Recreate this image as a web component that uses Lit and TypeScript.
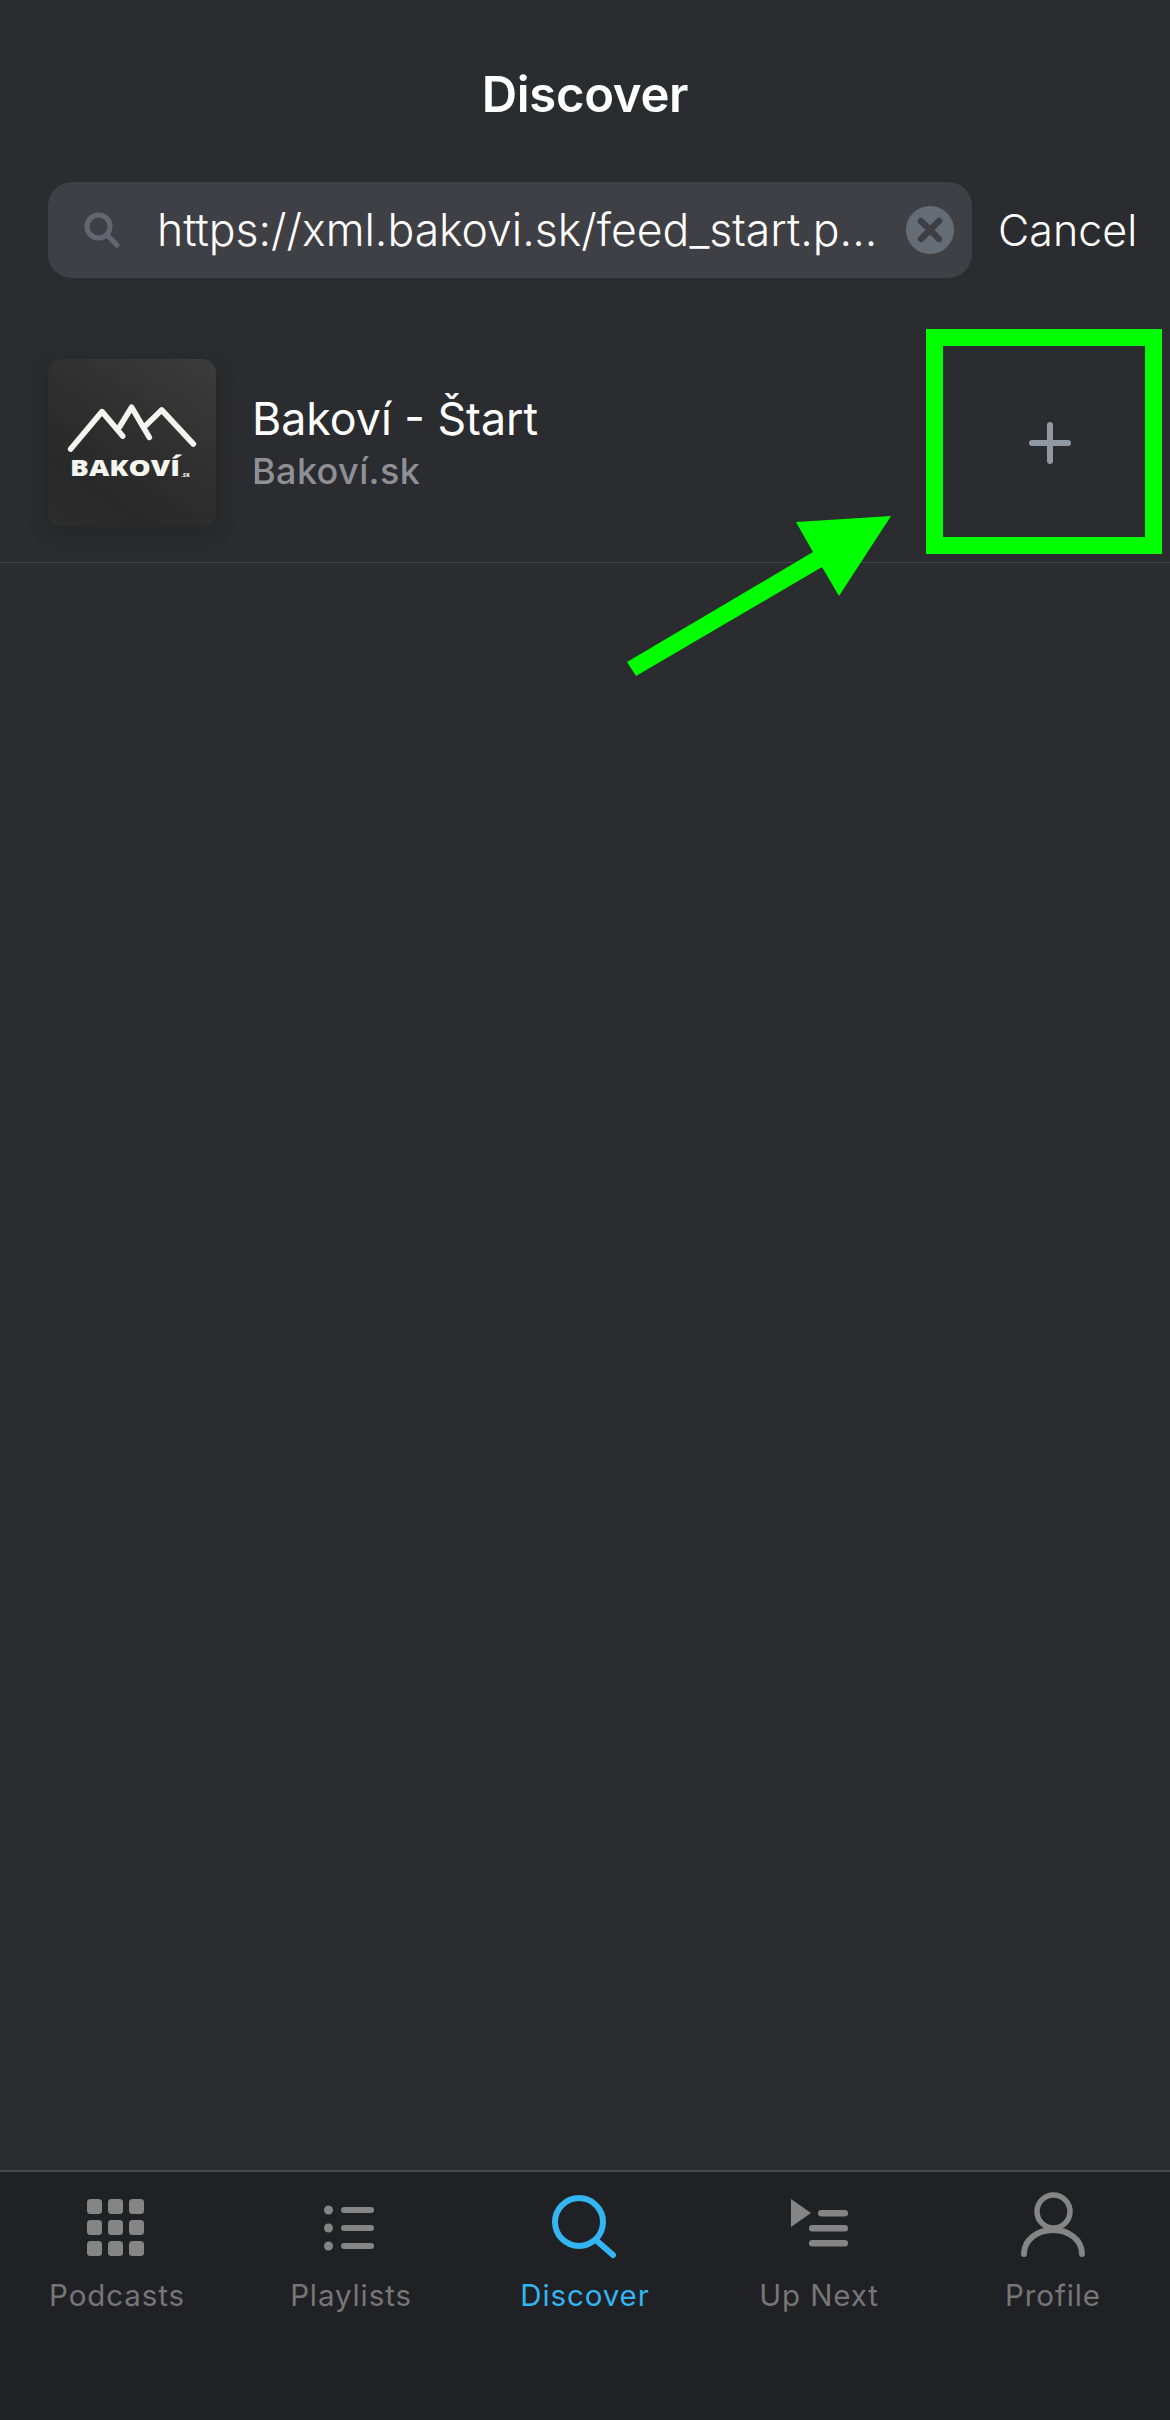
import { LitElement, html, css, svg } from "lit";
import { customElement } from "lit/decorators.js";

const icons: Record<string, unknown> = {
  Podcasts: svg`${[9, 30, 51].map((y) =>
    [6, 27, 48].map((x) => svg`<rect x=${x} y=${y} width="15" height="15" rx="3.5" fill="currentColor"/>`)
  )}`,
  Playlists: svg`${[20, 38, 56].map(
    (y) => svg`<circle cx="13.5" cy=${y} r="4.5" fill="currentColor"/><rect x="26" y=${y - 3} width="33" height="6" rx="3" fill="currentColor"/>`
  )}`,
  Discover: svg`<circle cx="30" cy="32" r="24" fill="none" stroke="currentColor" stroke-width="6"/><path d="M48 51 L64 65" fill="none" stroke="currentColor" stroke-width="6" stroke-linecap="round"/>`,
  "Up Next": svg`<path d="M8 9 L28 23 L8 37 Z" fill="currentColor"/><rect x="35" y="20" width="30" height="6.5" rx="3.2" fill="currentColor"/><rect x="26" y="35" width="39" height="6.5" rx="3.2" fill="currentColor"/><rect x="26" y="50" width="39" height="6.5" rx="3.2" fill="currentColor"/>`,
  Profile: svg`<circle cx="36.5" cy="21.5" r="16.5" fill="none" stroke="currentColor" stroke-width="5.5"/><path d="M7 64 C7 50 20 40 36 40 C52 40 65 50 65 64" fill="none" stroke="currentColor" stroke-width="6" stroke-linecap="round"/>`,
};

@customElement("app-root")
export class AppRoot extends LitElement {
  static styles = css`
    :host {
      display: block;
      position: relative;
      width: 1170px;
      height: 2420px;
      overflow: hidden;
      background: #2b2c30;
      font-family: Inter, "Liberation Sans", sans-serif;
      color: #fff;
    }
    .page {
      display: flex;
      flex-direction: column;
      height: 100%;
    }
    .header {
      height: 182px;
      flex: none;
      display: flex;
      justify-content: center;
      padding-top: 66px;
      box-sizing: border-box;
    }
    .title {
      font-size: 49px;
      font-weight: 600;
      line-height: 58px;
      letter-spacing: -0.3px;
    }
    .search-row {
      flex: none;
      display: flex;
      align-items: center;
      height: 96px;
      padding-left: 48px;
    }
    .search {
      width: 924px;
      height: 96px;
      flex: none;
      box-sizing: border-box;
      border-radius: 24px;
      background: #3f4045;
      display: flex;
      align-items: center;
      padding: 0 18px 0 36px;
    }
    .search-icon {
      width: 36px;
      height: 36px;
      flex: none;
      color: #62676f;
    }
    .query {
      margin-left: 37px;
      flex: 1;
      min-width: 0;
      font-size: 44.5px;
      font-weight: 300;
      line-height: 60px;
      white-space: nowrap;
    }
    .clear {
      width: 48px;
      height: 48px;
      flex: none;
    }
    .cancel {
      margin-left: 26px;
      font-size: 43px;
      font-weight: 300;
      line-height: 60px;
    }
    .result {
      flex: none;
      margin-top: 81px;
      height: 168px;
      padding: 0 0 35px 48px;
      display: flex;
      align-items: stretch;
      border-bottom: 1px solid #414246;
    }
    .thumb {
      width: 168px;
      height: 168px;
      flex: none;
      border-radius: 14px;
      overflow: hidden;
      background: linear-gradient(215deg, #3c3c3c 0%, #2f2f2f 45%, #292929 75%, #2d2d2d 100%);
      box-shadow: 0 6px 20px rgba(0, 0, 0, 0.18);
    }
    .thumb svg {
      display: block;
    }
    .logo-text {
      font-family: "Open Sans", sans-serif;
      font-weight: 800;
      font-size: 66px;
      fill: #f5f5f0;
    }
    .logo-small {
      font-family: "Open Sans", sans-serif;
      font-weight: 800;
      font-size: 15px;
      fill: #f5f5f0;
      letter-spacing: 1px;
    }
    .meta {
      margin-left: 36px;
      display: flex;
      flex-direction: column;
      padding-top: 33px;
    }
    .name {
      font-size: 44.7px;
      font-weight: 400;
      line-height: 54px;
    }
    .author {
      margin-top: 3px;
      font-size: 36px;
      font-weight: 500;
      line-height: 44px;
      color: #8e9096;
      letter-spacing: 0.4px;
    }
    .spacer {
      flex: 1;
    }
    .tabbar {
      flex: none;
      height: 250px;
      box-sizing: border-box;
      background: #202125;
      border-top: 2px solid #46474b;
      display: grid;
      grid-template-columns: repeat(5, 1fr);
    }
    .tab {
      display: flex;
      flex-direction: column;
      align-items: center;
      padding-top: 18px;
      color: #858585;
    }
    .tab svg {
      width: 72px;
      height: 72px;
      display: block;
    }
    .tab span {
      margin-top: 15px;
      font-size: 29.5px;
      line-height: 36px;
      letter-spacing: 0.9px;
      color: #767676;
    }
    .tab.active,
    .tab.active span {
      color: #33b5f3;
    }
    .overlay {
      position: absolute;
      inset: 0;
      width: 1170px;
      height: 2420px;
      pointer-events: none;
    }
    .mark {
      fill: #00ff00;
    }
    .plus {
      stroke: #8f98a3;
      stroke-width: 6;
      stroke-linecap: round;
    }
  `;

  render() {
    return html`
      <div class="page">
        <div class="header"><div class="title">Discover</div></div>
        <div class="search-row">
          <div class="search">
            <svg class="search-icon" viewBox="0 0 36 36">
              <circle cx="14.5" cy="14.5" r="11.5" fill="none" stroke="currentColor" stroke-width="5"/>
              <path d="M23.5 23.5 L33 33" fill="none" stroke="currentColor" stroke-width="5" stroke-linecap="round"/>
            </svg>
            <div class="query">https://xml.bakovi.sk/feed_start.p...</div>
            <svg class="clear" viewBox="0 0 48 48">
              <circle cx="24" cy="24" r="24" fill="#666c75"/>
              <path d="M15 15 L33 33 M33 15 L15 33" stroke="#3e3f44" stroke-width="6.5" stroke-linecap="round"/>
            </svg>
          </div>
          <div class="cancel">Cancel</div>
        </div>
        <div class="result">
          <div class="thumb">
            <svg viewBox="24 27 504 504" width="168" height="168">
              <path d="M92 297 L186 185 L248 258" fill="none" stroke="#f5f5f0" stroke-width="17" stroke-linecap="round" stroke-linejoin="round"/>
              <path d="M238 232 L275 172 L328 262" fill="none" stroke="#f5f5f0" stroke-width="17" stroke-linecap="round" stroke-linejoin="round"/>
              <path d="M318 226 L365 180 L460 282" fill="none" stroke="#f5f5f0" stroke-width="17" stroke-linecap="round" stroke-linejoin="round"/>
              <text class="logo-text" x="90" y="378" textLength="330" lengthAdjust="spacingAndGlyphs">BAKOVÍ</text>
              <text class="logo-small" x="424" y="380">.SK</text>
            </svg>
          </div>
          <div class="meta">
            <div class="name">Bakoví - Štart</div>
            <div class="author">Bakoví.sk</div>
          </div>
        </div>
        <div class="spacer"></div>
        <div class="tabbar">
          ${Object.keys(icons).map(
            (label) => html`
              <div class="tab ${label === "Discover" ? "active" : ""}">
                <svg viewBox="0 0 72 72">${icons[label]}</svg>
                <span>${label}</span>
              </div>
            `
          )}
        </div>
      </div>
      <svg class="overlay" viewBox="0 0 1170 2420">
        <path class="plus" d="M1050 425 V461 M1032 443 H1068"/>
        <path class="mark" fill-rule="evenodd" d="M926 329 H1162 V554 H926 Z M943 346 V537 H1145 V346 Z"/>
        <path class="mark" d="M627 662 L813 552 L796 522 L891 516 L839 596 L822 567 L636 676 Z"/>
      </svg>
    `;
  }
}
